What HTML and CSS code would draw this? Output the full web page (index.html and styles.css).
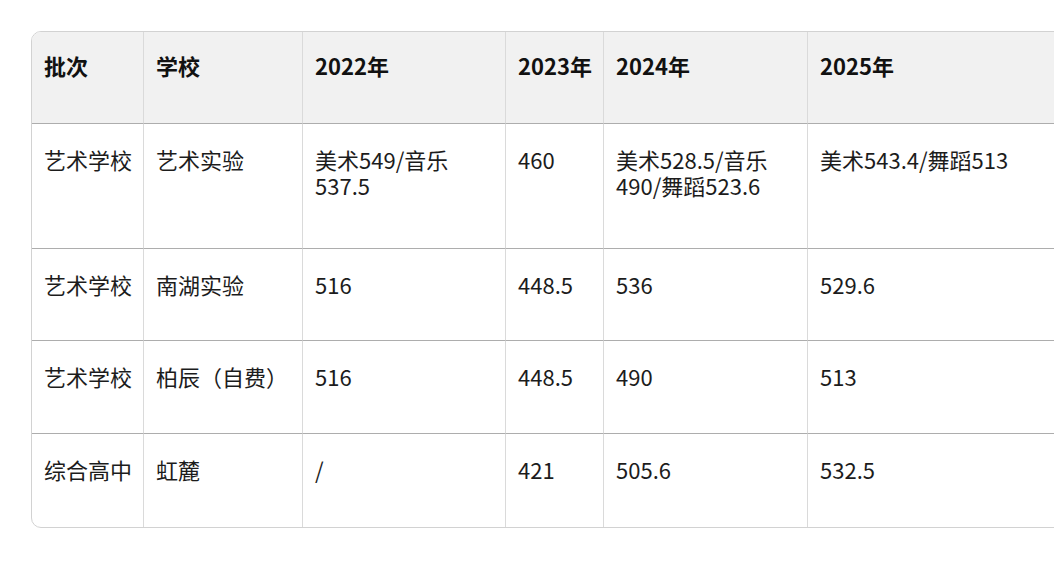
FILE: index.html
```html
<!DOCTYPE html>
<html lang="zh">
<head>
<meta charset="utf-8">
<title>分数线</title>
<link rel="stylesheet" href="styles.css">
</head>
<body>
<div class="page">
<table class="scores">
  <colgroup>
    <col class="c1"><col class="c2"><col class="c3"><col class="c4"><col class="c5"><col class="c6">
  </colgroup>
  <thead>
    <tr class="r-head">
      <th>批次</th><th>学校</th><th>2022年</th><th>2023年</th><th>2024年</th><th>2025年</th>
    </tr>
  </thead>
  <tbody>
    <tr class="r-tall">
      <td>艺术学校</td><td>艺术实验</td><td><span class="ln">美术549/音乐</span><span class="ln">537.5</span></td><td>460</td><td><span class="ln">美术528.5/音乐</span><span class="ln">490/舞蹈523.6</span></td><td>美术543.4/舞蹈513</td>
    </tr>
    <tr class="r-a">
      <td>艺术学校</td><td>南湖实验</td><td>516</td><td>448.5</td><td>536</td><td>529.6</td>
    </tr>
    <tr class="r-b">
      <td>艺术学校</td><td>柏辰（自费）</td><td>516</td><td>448.5</td><td>490</td><td>513</td>
    </tr>
    <tr class="r-b last">
      <td>综合高中</td><td>虹麓</td><td>/</td><td>421</td><td>505.6</td><td>532.5</td>
    </tr>
  </tbody>
</table>
</div>
</body>
</html>
```

FILE: styles.css
```css
html, body {
  margin: 0;
  padding: 0;
  background: #ffffff;
  overflow: hidden;
}

.page {
  padding: 31px 0 0 31px;
  width: 1200px;
}

.scores {
  border-collapse: separate;
  border-spacing: 0;
  table-layout: fixed;
  width: 1056px;
  border: 1px solid #d2d2d2;
  border-radius: 10px;
  overflow: hidden;
  font-family: "Noto Sans CJK SC", "Noto Sans", sans-serif;
  font-size: 22px;
  line-height: 26.4px;
  color: #1c1c1c;
}

.c1 { width: 112px; }
.c2 { width: 159px; }
.c3 { width: 203px; }
.c4 { width: 98px; }
.c5 { width: 204px; }
.c6 { width: 280px; }

.scores th,
.scores td {
  text-align: left;
  vertical-align: top;
  white-space: nowrap;
  padding: 22px 0 0 12px;
  border-right: 1px solid #dadada;
  border-bottom: 1px solid #adadad;
  box-sizing: border-box;
}

.scores th {
  padding-top: 20px;
  background: #f1f1f1;
  font-weight: 700;
  color: #111111;
}

.scores th:last-child,
.scores td:last-child {
  border-right: none;
}

.ln {
  display: block;
}

.r-head { height: 92px; }
.r-tall { height: 125px; }
.r-a { height: 92px; }
.r-b { height: 93px; }

.scores tr.last td {
  border-bottom: none;
}
```
